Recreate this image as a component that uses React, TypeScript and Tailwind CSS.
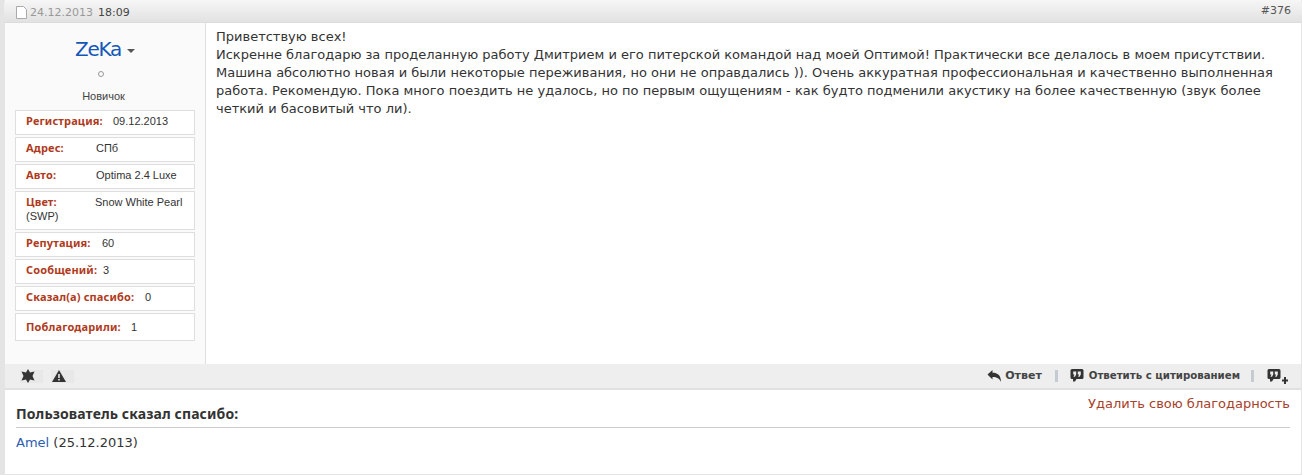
const sans = "font-['DejaVu_Sans',Verdana,sans-serif]";
const small = "font-['Liberation_Sans',Arial,sans-serif]";
const bold = "font-['Noto_Sans',sans-serif]";

function Row({ label, value, labelClass, tall, last, wrap }: { label: string; value: string; labelClass: string; tall?: boolean; last?: boolean; wrap?: string }) {
  return (
    <div className={`border border-[#dedede] bg-white px-[10px] text-[11px] leading-[14px] text-[#333] ${last ? "h-[28px] pt-[6px]" : tall ? "h-[39px] pt-[3px]" : "h-[25px] pt-[3px]"}`}>
      <div className="flex whitespace-nowrap">
        <b className={`shrink-0 tracking-[0.15px] text-[#b03a1c] ${bold} ${labelClass}`}>{label}</b>
        <span>{value}</span>
      </div>
      {wrap && <div>{wrap}</div>}
    </div>
  );
}

function Reply() {
  return (
    <svg width="15" height="14" viewBox="0 0 15 14" fill="#333"><path d="M.5 5.500L5.500 1v2.800c5 0 8.500 2.500 8.500 9.200-1.500-3.500-3.800-5-8.500-5v2.500z" /></svg>
  );
}
function Quote({ plus }: { plus?: boolean }) {
  return (
    <svg width={plus ? 21 : 14} height="16" viewBox={plus ? "0 0 21 16" : "0 0 14 16"} fill="#333">
      <path d="M2 1h10a1.500 1.500 0 0 1 1.500 1.500v7A1.500 1.500 0 0 1 12 11H6.500L5 13.500H3V11H2A1.500 1.500 0 0 1 .5 9.500v-7A1.500 1.500 0 0 1 2 1z" />
      <path fill="#eee" d="M3.200 3.500h3v3L5 8.800H3.500l1-2.300H3.200zM7.800 3.500h3v3L9.600 8.800H8.100l1-2.300H7.800z" />
      {plus && <path d="M17 9h2v2.500h2v2h-2V16h-2v-2.500h-2v-2h2z" />}
    </svg>
  );
}

export default function App() {
  return (
    <div className={`h-[475px] w-[1302px] overflow-hidden bg-white ${sans}`}>
      <div className="h-[475px] border-b border-l-[5px] border-r border-[#e4e4e4]">
        <div className="-ml-[1px] -mr-[1px] flex h-[23px] items-center justify-between rounded-t-[4px] border-b border-[#dcdcdc] bg-gradient-to-b from-[#f6f6f6] to-[#e2e2e2] pl-[12px] pr-[11px] text-[11px]">
          <div className="mt-[4px] flex items-center gap-[3px]">
            <svg className="-mt-[1px]" width="11" height="13" viewBox="0 0 11 13" fill="#fff" stroke="#aaa"><path d="M.5 .5h7l3 3v9H.5z" /></svg>
            <span className="text-[#999]">24.12.2013</span>
            <span className="ml-[2px] text-[#444]">18:09</span>
          </div>
          <span className="text-[#555]">#376</span>
        </div>

        <div className="flex h-[341px]">
          <div className={`flex w-[201px] shrink-0 flex-col border-r border-[#dedede] bg-[#fafafa] px-[10px] ${small}`}>
            <div className="mt-[13px] flex items-center justify-center text-[20px] leading-[26px] tracking-[-1.2px] text-[#1457b8] font-['DejaVu_Sans',sans-serif]">
              ZeKa
              <span className="ml-[6px] mt-[3px] h-0 w-0 border-x-[4px] border-t-[4px] border-x-transparent border-t-[#555]" />
            </div>
            <div className="mx-auto -translate-x-[4px] mt-[9px] h-[6px] w-[6px] rounded-full border border-[#999]" />
            <div className="mr-[3px] mt-[12px] text-center text-[11px] leading-[14px] text-[#444]">Новичок</div>
            <div className="mt-[7px] flex flex-col gap-[2px]">
              <Row label="Регистрация:" value="09.12.2013" labelClass="w-[87px]" />
              <Row label="Адрес:" value="СПб" labelClass="w-[70px]" />
              <Row label="Авто:" value="Optima 2.4 Luxe" labelClass="w-[70px]" />
              <Row label="Цвет:" value="Snow White Pearl" labelClass="w-[69px]" tall wrap="(SWP)" />
              <Row label="Репутация:" value="60" labelClass="w-[76px]" />
              <Row label="Сообщений:" value="3" labelClass="w-[77px]" />
              <Row label="Сказал(а) спасибо:" value="0" labelClass="w-[119px]" />
              <Row label="Поблагодарили:" value="1" labelClass="w-[105px]" last />
            </div>
          </div>
          <div className="flex-1 pl-[10px] pr-[8px] pt-[5px] text-[13px] leading-[18px] text-[#333]">
            Приветствую всех!
            <br />
            Искренне благодарю за проделанную работу Дмитрием и его питерской командой над моей Оптимой! Практически все делалось в моем присутствии. Машина абсолютно новая и были некоторые переживания, но они не оправдались )). Очень аккуратная профессиональная и качественно выполненная работа. Рекомендую. Пока много поездить не удалось, но по первым ощущениям - как будто подменили акустику на более качественную (звук более четкий и басовитый что ли).
          </div>
        </div>

        <div className="flex h-[26px] items-center justify-between border-b-2 border-[#e0e0e0] bg-[#eeeeee] pl-[15px] pr-[13px] text-[#333]">
          <div className="flex items-center gap-[8px]">
            <span className="flex h-[13px] w-[23px] items-center bg-[#e8e8e8] pl-[1px]">
              <svg width="14" height="14" viewBox="0 0 14 14" fill="#333"><path d="M7 0l2 3.500 4.500-1L11.500 7l2 4.500-4.500-1L7 14l-2-3.500-4.500 1L2.500 7 .5 2.500l4.500 1z" /></svg>
            </span>
            <span className="flex h-[13px] w-[23px] items-center bg-[#e8e8e8] pl-[1px]">
              <svg width="14" height="12" viewBox="0 0 14 12"><path fill="#333" d="M7 0l7 12H0z" /><path fill="#fff" d="M6.300 4h1.400v4H6.300zM6.300 9h1.400v1.500H6.300z" /></svg>
            </span>
          </div>
          <div className="flex items-center font-bold text-[#444]">
            <span className="flex items-center gap-[3px] text-[11px]"><Reply />Ответ</span>
            <span className="ml-[13px] mr-[12px] h-[12px] w-[3px] bg-[#c5cbd0]" />
            <span className="flex items-center gap-[5px] text-[10.200px]"><Quote />Ответить с цитированием</span>
            <span className="ml-[11px] mr-[13px] h-[12px] w-[3px] bg-[#c5cbd0]" />
            <Quote plus />
          </div>
        </div>

        <div className="relative pl-[11px] pr-[11px] text-[13px] text-[#333]">
          <span className="absolute right-[11px] top-[5px] leading-[18px] text-[#a8412a]">Удалить свою благодарность</span>
          <div className={`border-b border-[#ccc] pb-[4px] pt-[14px] text-[14px] font-bold leading-[19px] tracking-[0.1px] ${bold}`}>Пользователь сказал спасибо:</div>
          <div className="pt-[6px] leading-[18px]"><span className="text-[#2a5db0]">Amel</span> (25.12.2013)</div>
        </div>
      </div>
    </div>
  );
}
